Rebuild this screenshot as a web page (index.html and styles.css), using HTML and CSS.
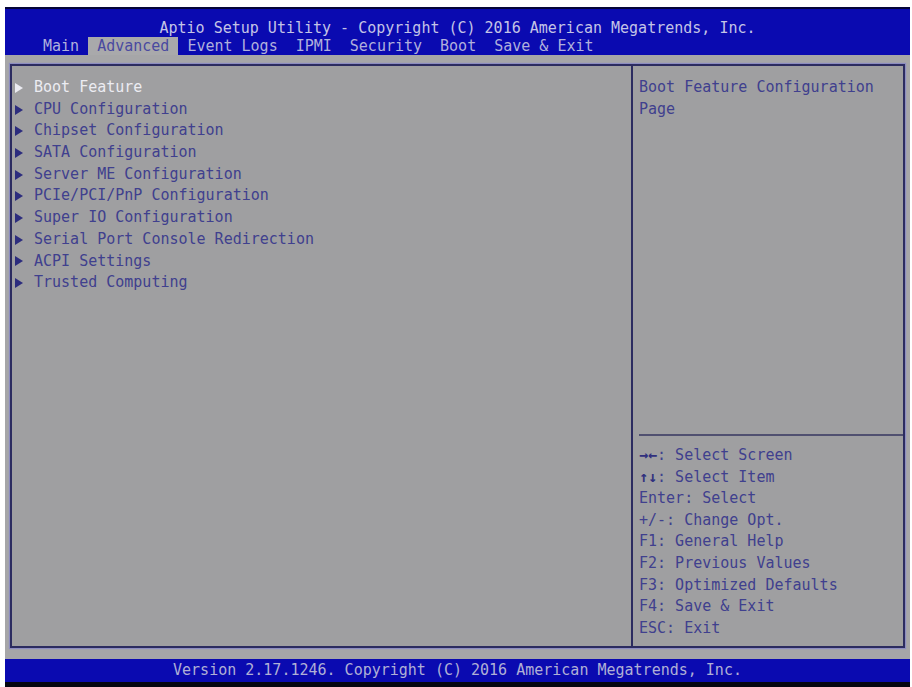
FILE: index.html
```html
<!DOCTYPE html>
<html>
<head>
<meta charset="utf-8">
<link rel="stylesheet" href="styles.css">
</head>
<body>
<div class="screen">
  <header class="header">
    <div class="title">Aptio Setup Utility - Copyright (C) 2016 American Megatrends, Inc.</div>
    <nav class="tabs">
      <span class="tab">Main</span>
      <span class="tab active">Advanced</span>
      <span class="tab">Event Logs</span>
      <span class="tab">IPMI</span>
      <span class="tab">Security</span>
      <span class="tab">Boot</span>
      <span class="tab">Save &amp; Exit</span>
    </nav>
  </header>
  <main class="body">
    <div class="box">
      <ul class="menu">
        <li class="item selected"><span class="arrow"></span>Boot Feature</li>
        <li class="item"><span class="arrow"></span>CPU Configuration</li>
        <li class="item"><span class="arrow"></span>Chipset Configuration</li>
        <li class="item"><span class="arrow"></span>SATA Configuration</li>
        <li class="item"><span class="arrow"></span>Server ME Configuration</li>
        <li class="item"><span class="arrow"></span>PCIe/PCI/PnP Configuration</li>
        <li class="item"><span class="arrow"></span>Super IO Configuration</li>
        <li class="item"><span class="arrow"></span>Serial Port Console Redirection</li>
        <li class="item"><span class="arrow"></span>ACPI Settings</li>
        <li class="item"><span class="arrow"></span>Trusted Computing</li>
      </ul>
      <aside class="side">
        <div class="desc">Boot Feature Configuration<br>Page</div>
        <div class="rule"></div>
        <ul class="help">
          <li><b class="key">&#8594;&#8592;</b>: Select Screen</li>
          <li><b class="key">&#8593;&#8595;</b>: Select Item</li>
          <li>Enter: Select</li>
          <li>+/-: Change Opt.</li>
          <li>F1: General Help</li>
          <li>F2: Previous Values</li>
          <li>F3: Optimized Defaults</li>
          <li>F4: Save &amp; Exit</li>
          <li>ESC: Exit</li>
        </ul>
      </aside>
    </div>
  </main>
  <footer class="footer">Version 2.17.1246. Copyright (C) 2016 American Megatrends, Inc.</footer>
  <div class="bottom"></div>
</div>
</body>
</html>
```

FILE: styles.css
```css
html, body {
  margin: 0;
  padding: 0;
  background: #ffffff;
}

.screen {
  margin: 7px 0 0 5px;
  width: 905px;
  height: 680px;
  display: flex;
  flex-direction: column;
  font-family: "DejaVu Sans Mono", "Liberation Mono", monospace;
  font-size: 15px;
}

.header {
  height: 48px;
  box-sizing: border-box;
  background: #0a0ab0;
  border-top: 2px solid #06063a;
  color: #c4c4e6;
  display: flex;
  flex-direction: column;
}

.title {
  height: 18px;
  line-height: 18px;
  margin-top: 10px;
  text-align: center;
  white-space: pre;
}

.tabs {
  display: flex;
  height: 18px;
  line-height: 18px;
  padding-left: 29px;
  white-space: pre;
  color: #b0b0dc;
}

.tab {
  padding: 0 9px;
}

.tab.active {
  background: #a9a9ab;
  color: #4a4aa0;
}

.body {
  flex: 1;
  background: #a6a6a8;
  padding: 9px 5px 11px 5px;
  display: flex;
}

.box {
  flex: 1;
  display: grid;
  grid-template-columns: 621px 1fr;
  border: 2px solid #2c2c60;
  box-shadow: 0 0 1px 1px #8c8cc0;
  background: #9f9fa1;
}

.menu {
  list-style: none;
  margin: 0;
  padding: 11px 0 0 0;
  border-right: 2px solid #2c2c60;
}

.item {
  height: 21.7px;
  line-height: 21.7px;
  color: #40408e;
  display: flex;
  align-items: center;
  white-space: pre;
}

.item .arrow {
  width: 0;
  height: 0;
  border-top: 5px solid transparent;
  border-bottom: 5px solid transparent;
  border-left: 8px solid #2c2c7e;
  margin: 0 11px 0 3px;
}

.item.selected {
  color: #ececf2;
}

.item.selected .arrow {
  border-left-color: #ececf2;
}

.side {
  display: flex;
  flex-direction: column;
  padding: 11px 0 0 6px;
}

.desc {
  line-height: 21.7px;
  color: #40408e;
  height: 357px;
}

.rule {
  height: 2px;
  background: #505070;
}

.help {
  list-style: none;
  margin: 0;
  padding: 9px 0 0 0;
  color: #40408e;
}

.help li {
  height: 21.6px;
  line-height: 21.6px;
  white-space: pre;
}

.key {
  font-weight: bold;
  color: #30307e;
}

.footer {
  height: 23px;
  line-height: 23px;
  background: #0a0ab0;
  color: #b0b0d6;
  text-align: center;
  white-space: pre;
}

.bottom {
  height: 5px;
  background: #050510;
}
```
